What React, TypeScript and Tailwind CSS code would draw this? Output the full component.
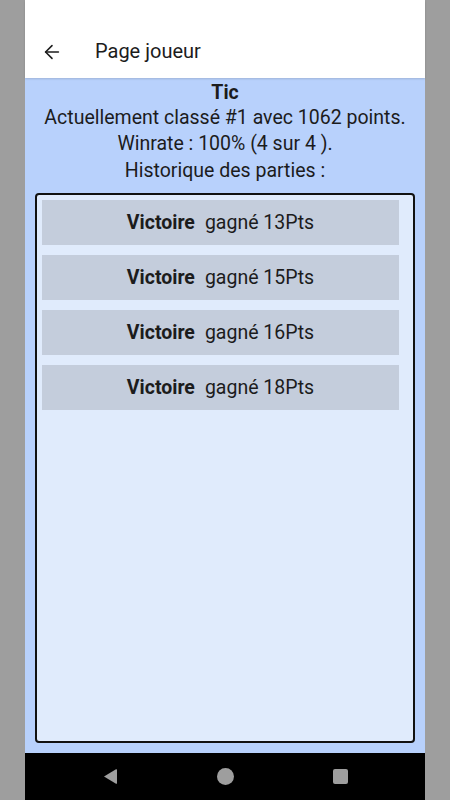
import { ArrowLeft } from "lucide-react";

const games = [13, 15, 16, 18];

export default function App() {
  return (
    <div
      className="flex h-[800px] w-[450px] justify-center bg-[#9e9e9e]"
      style={{ fontFamily: "Roboto, 'Noto Sans', sans-serif" }}
    >
      <div className="flex w-[400px] flex-col bg-[#b8d1fc]">
        {/* top app bar */}
        <div className="flex h-[78px] items-end bg-white pb-[15px] shadow-[0_1px_2px_rgba(0,0,0,0.15)]">
          <ArrowLeft className="ml-[16px] h-[22px] w-[22px] text-[#1c1c1c]" strokeWidth={1.7} />
          <span className="ml-[32px] text-[20px] leading-[24px] text-[#1c1c1c]">Page joueur</span>
        </div>

        <div className="flex flex-1 flex-col items-center px-[10px] pb-[10px] text-[#1c1c1c]">
          <div className="mt-[2px] text-[19.5px] font-bold leading-[25px]">Tic</div>
          <div className="text-[19.5px] leading-[26px]">Actuellement classé #1 avec 1062 points.</div>
          <div className="text-[19.5px] leading-[26px]">Winrate : 100% (4 sur 4 ).</div>
          <div className="text-[19.5px] leading-[27px]">Historique des parties :</div>

          <div className="mt-[9px] flex w-full flex-1 flex-col gap-[10px] rounded-[4px] border-2 border-[#111] bg-[#e0ebfc] pb-[5px] pl-[5px] pr-[14px] pt-[5px]">
            {games.map((pts) => (
              <div
                key={pts}
                className="flex h-[45px] items-center justify-center bg-[#c4cddc] text-[19.5px]"
              >
                <span className="font-bold">Victoire</span>
                <span className="ml-[10px]">gagné {pts}Pts</span>
              </div>
            ))}
          </div>
        </div>

        {/* system nav bar */}
        <div className="flex h-[47px] items-center justify-center bg-black">
          <div className="flex w-[115px] justify-center">
            <svg width="15" height="17" viewBox="0 0 15 17">
              <path d="M1 8.5 L13 1.3 Q14 0.8 14 2 L14 15 Q14 16.2 13 15.7 Z" fill="#9e9e9e" />
            </svg>
          </div>
          <div className="flex w-[115px] justify-center">
            <svg width="17" height="17" viewBox="0 0 17 17">
              <circle cx="8.5" cy="8.5" r="8.5" fill="#9e9e9e" />
            </svg>
          </div>
          <div className="flex w-[115px] justify-center">
            <svg width="15" height="15" viewBox="0 0 15 15">
              <rect x="0" y="0" width="15" height="15" rx="2" fill="#9e9e9e" />
            </svg>
          </div>
        </div>
      </div>
    </div>
  );
}
